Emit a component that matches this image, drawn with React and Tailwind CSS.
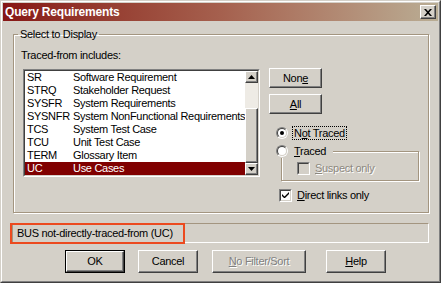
import React from 'react';

const rows = [
  ['SR', 'Software Requirement'],
  ['STRQ', 'Stakeholder Request'],
  ['SYSFR', 'System Requirements'],
  ['SYSNFR', 'System NonFunctional Requirements'],
  ['TCS', 'System Test Case'],
  ['TCU', 'Unit Test Case'],
  ['TERM', 'Glossary Item'],
  ['UC', 'Use Cases'],
];

const raised =
  'border-t border-l border-r border-b border-t-white border-l-white border-r-[#404040] border-b-[#404040] shadow-[inset_-1px_-1px_0_#808080]';

const Button = ({ children, width, disabled, isDefault }) => {
  const inner = (
    <div
      className={`flex items-center justify-center h-full w-full bg-[#d4d0c8] ${raised} ${
        disabled ? 'text-[#808080] [text-shadow:1px_1px_0_#fff]' : 'text-black'
      }`}
    >
      {children}
    </div>
  );
  return (
    <div
      className={`h-[23px] ${isDefault ? 'border border-black' : ''}`}
      style={{ width }}
    >
      {inner}
    </div>
  );
};

const Arrow = ({ down }) => (
  <svg width="7" height="4" viewBox="0 0 7 4">
    {down ? <path d="M0 0h7L3.5 4z" fill="#000" /> : <path d="M0 4h7L3.5 0z" fill="#000" />}
  </svg>
);

const Radio = ({ checked }) => (
  <div className="w-[12px] h-[12px] rounded-full border border-t-[#808080] border-l-[#808080] border-r-white border-b-white">
    <div className="w-full h-full rounded-full border border-t-[#404040] border-l-[#404040] border-r-[#d4d0c8] border-b-[#d4d0c8] bg-white flex items-center justify-center">
      {checked && <div className="w-[4px] h-[4px] rounded-full bg-black" />}
    </div>
  </div>
);

const Checkbox = ({ checked, disabled }) => (
  <div className="w-[13px] h-[13px] border border-t-[#808080] border-l-[#808080] border-r-white border-b-white">
    <div
      className={`w-full h-full border border-t-[#404040] border-l-[#404040] border-r-[#d4d0c8] border-b-[#d4d0c8] flex items-center justify-center ${
        disabled ? 'bg-[#d4d0c8]' : 'bg-white'
      }`}
    >
      {checked && (
        <svg width="7" height="7" viewBox="0 0 7 7">
          <path d="M0 2v2l2 2h1l4-4V0L2.5 4.5z" fill="#000" />
        </svg>
      )}
    </div>
  </div>
);

export default function App() {
  return (
    <div
      className="w-[441px] h-[283px] bg-[#d4d0c8] border border-t-[#d4d0c8] border-l-[#d4d0c8] border-r-[#404040] border-b-[#404040] text-[11px] leading-[13px] tracking-[-0.3px] text-black"
      style={{ fontFamily: '"Liberation Sans", Arial, sans-serif' }}
    >
      <div className="h-full border border-t-white border-l-white border-r-[#808080] border-b-[#808080] p-[1px] flex flex-col">
        {/* Title bar */}
        <div className="h-[18px] flex items-center justify-between pl-[2px] pr-[2px] bg-linear-to-r from-[#861515] via-[#a5604e] to-[#b9ad94]">
          <span className="text-white font-bold text-[12px] leading-[14px] tracking-[-0.2px]">Query Requirements</span>
          <div className={`w-[16px] h-[14px] bg-[#d4d0c8] flex items-center justify-center ${raised}`}>
            <svg width="8" height="7" viewBox="0 0 8 7">
              <path d="M0 0h2l2 2.3L6 0h2L5 3.5 8 7H6L4 4.7 2 7H0l3-3.5z" fill="#000" />
            </svg>
          </div>
        </div>

        {/* Body */}
        <div className="flex flex-col px-[9px]">
          <fieldset className="mt-[7px] ml-[1px] h-[185px] border border-[#a39580] shadow-[inset_1px_1px_0_#fff,1px_1px_0_#fff]">
            <legend className="ml-[4px] px-[2px]">Select to Display</legend>
            <div className="flex pt-[8px] pl-[7px]">
              {/* List column */}
              <div className="flex flex-col">
                <span>Traced-from includes:</span>
                <div className="mt-[7px] ml-[2px] w-[237px] h-[108px] border border-t-[#808080] border-l-[#808080] border-r-white border-b-white">
                  <div className="w-full h-full flex border border-t-[#404040] border-l-[#404040] border-r-[#d4d0c8] border-b-[#d4d0c8] bg-white">
                    <div className="flex-1 flex flex-col overflow-hidden">
                      {rows.map(([code, desc], i) => {
                        const sel = i === rows.length - 1;
                        return (
                          <div
                            key={code}
                            className={`h-[13px] flex items-center pl-[2px] whitespace-nowrap ${
                              sel ? 'bg-[#800000] text-white' : 'text-black'
                            }`}
                          >
                            <span className="w-[46px] shrink-0">{code}</span>
                            <span>{desc}</span>
                          </div>
                        );
                      })}
                    </div>
                    {/* Scrollbar */}
                    <div className="w-[13px] flex flex-col bg-[#eeebe5]">
                      <div className={`h-[12px] bg-[#d4d0c8] flex items-center justify-center ${raised}`}>
                        <Arrow />
                      </div>
                      <div className="h-[25px]" />
                      <div className={`h-[55px] bg-[#d4d0c8] ${raised}`} />
                      <div className={`h-[12px] bg-[#d4d0c8] flex items-center justify-center ${raised}`}>
                        <Arrow down />
                      </div>
                    </div>
                  </div>
                </div>
              </div>

              {/* Right column */}
              <div className="flex flex-col ml-[9px] mt-[19px]">
                <div className="w-[53px] h-[20px]">
                  <div className={`h-full flex items-center justify-center bg-[#d4d0c8] ${raised}`}>
                    <span>
                      Non<u>e</u>
                    </span>
                  </div>
                </div>
                <div className="w-[53px] h-[20px] mt-[6px]">
                  <div className={`h-full flex items-center justify-center bg-[#d4d0c8] ${raised}`}>
                    <span>
                      <u>A</u>ll
                    </span>
                  </div>
                </div>

                <div className="flex items-center h-[14px] mt-[12px] ml-[7px]">
                  <Radio checked />
                  <span className="ml-[5px] px-[1px] outline outline-1 outline-dotted outline-black leading-[12px]">
                    N<u>o</u>t Traced
                  </span>
                </div>

                <div className="relative z-10 flex items-center h-[14px] mt-[4px] ml-[7px] w-[57px] bg-[#d4d0c8]">
                  <Radio />
                  <span className="ml-[6px]">
                    <u>T</u>raced
                  </span>
                </div>
                <div className="-mt-[7px] ml-[12px] w-[138px] h-[30px] border border-[#a39580] shadow-[inset_1px_1px_0_#fff,1px_1px_0_#fff] pt-[10px] pl-[15px]">
                  <div className="flex items-center">
                    <Checkbox disabled />
                    <span className="ml-[5px] text-[#8c887f] [text-shadow:1px_1px_0_#fff]">
                      <u>S</u>uspect only
                    </span>
                  </div>
                </div>

                <div className="flex items-center mt-[8px] ml-[10px]">
                  <Checkbox checked />
                  <span className="ml-[5px]">
                    <u>D</u>irect links only
                  </span>
                </div>
              </div>
            </div>
          </fieldset>

          {/* Status */}
          <div className="relative mt-[10px] h-[20px] border border-t-[#a39580] border-l-[#a39580] border-r-white border-b-white flex items-center pl-[4px]">
            <span>BUS not-directly-traced-from (UC)</span>
            <div className="absolute -left-[3px] -top-[1px] w-[175px] h-[21px] border-2 border-[#ec4a1f]" />
          </div>

          {/* Buttons */}
          <div className="flex mt-[7px] pl-[53px]">
            <Button width={60} isDefault>
              OK
            </Button>
            <div className="ml-[13px]">
              <Button width={60}>Cancel</Button>
            </div>
            <div className="ml-[14px]">
              <Button width={94} disabled>
                <span>
                  <u>N</u>o Filter/Sort
                </span>
              </Button>
            </div>
            <div className="ml-[20px]">
              <Button width={60}>
                <span>
                  <u>H</u>elp
                </span>
              </Button>
            </div>
          </div>
        </div>
      </div>
    </div>
  );
}
